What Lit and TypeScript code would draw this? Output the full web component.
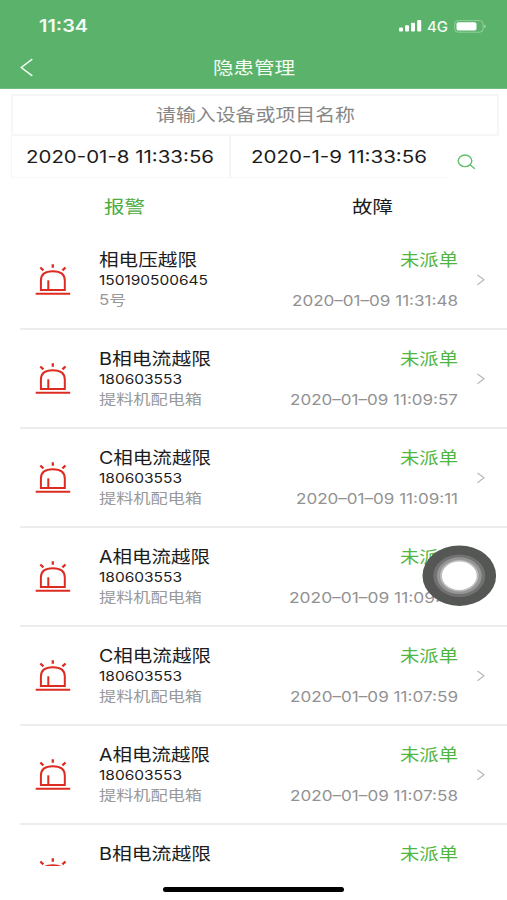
import { LitElement, html, css, svg, nothing } from "lit";
import { customElement, property } from "lit/decorators.js";

/** A single line of text stretched horizontally to a given width. */
@customElement("wide-text")
class WideText extends LitElement {
  @property({ type: Number }) w = 0;

  static styles = css`
    :host { display: block; white-space: nowrap; flex: none; }
    .t { display: inline-block; transform-origin: 0 50%; }
  `;

  updated() {
    this.style.width = this.w + "px";
    const t = this.renderRoot.querySelector(".t") as HTMLElement;
    t.style.transform = "none";
    const natural = t.getBoundingClientRect().width;
    if (natural) t.style.transform = `scaleX(${this.w / natural})`;
  }

  render() {
    return html`<span class="t"><slot @slotchange=${() => this.requestUpdate()}></slot></span>`;
  }
}

interface Alarm {
  title: string;
  tw: number;
  id?: string;
  iw?: number;
  place?: string;
  pw?: number;
  time?: string;
  mw?: number;
}

const box = { id: "180603553", iw: 83, place: "提料机配电箱", pw: 103 };
const alarms: Alarm[] = [
  { title: "相电压越限", tw: 98, id: "150190500645", iw: 109, place: "5号", pw: 27, time: "2020–01–09 11:31:48", mw: 166 },
  { title: "B相电流越限", tw: 112, ...box, time: "2020–01–09 11:09:57", mw: 168 },
  { title: "C相电流越限", tw: 112, ...box, time: "2020–01–09 11:09:11", mw: 162 },
  { title: "A相电流越限", tw: 111, ...box, time: "2020–01–09 11:09:10", mw: 169 },
  { title: "C相电流越限", tw: 112, ...box, time: "2020–01–09 11:07:59", mw: 168 },
  { title: "A相电流越限", tw: 111, ...box, time: "2020–01–09 11:07:58", mw: 168 },
  { title: "B相电流越限", tw: 112 },
];

@customElement("app-root")
class AppRoot extends LitElement {
  static styles = css`
    :host {
      display: flex;
      flex-direction: column;
      position: relative;
      width: 507px;
      height: 900px;
      overflow: hidden;
      background: #fff;
      color: #1c1c1c;
      font-family: Inter, "Noto Sans CJK SC", sans-serif;
    }
    * { box-sizing: border-box; }
    svg { display: block; flex: none; }
    header { background: #5bb36b; color: #f3fbf4; height: 89px; flex: none; border-bottom: 1px solid #70bd7e; }
    .status { display: flex; align-items: center; height: 52px; padding: 0 20px 0 39px; }
    .clock { font-size: 17px; font-weight: 600; line-height: 20px; }
    .signal { margin: 0 5px 0 auto; }
    .net { font-size: 14px; font-weight: 500; line-height: 20px; margin: 1px 6px 0 0; }
    .nav { display: flex; align-items: center; height: 30px; padding-left: 20px; }
    .title { font-size: 17px; line-height: 24px; margin: 1px 0 0 179px; }
    .search { margin: 5px 8px 0 11px; height: 42px; border: 2px solid #f6f6f6; display: flex; justify-content: center; align-items: center; color: #868686; font-size: 17px; line-height: 24px; flex: none; }
    .range { display: flex; margin-left: 11px; height: 42px; flex: none; font-size: 17px; line-height: 24px; }
    .date { height: 42px; padding: 9px 0 0 14px; border-left: 1px solid #f6f6f6; border-bottom: 1px solid #f8f8f8; width: 218px; }
    .date.to { padding-left: 20px; border-left: 2px solid #f4f4f4; }
    .glass { margin: 18px 0 0 10px; }
    .tabs { display: flex; height: 53px; flex: none; align-items: center; font-size: 17px; line-height: 24px; padding: 5px 0 0 104px; }
    .tab { color: #4cab41; }
    .tab.off { color: #1c1c1c; margin-left: 207px; }
    .list { height: 635px; overflow: hidden; flex: none; }
    .row { display: flex; height: 99px; margin-left: 20px; border-bottom: 2px solid #ededed; }
    .alarm { margin: 32px 0 0 15px; }
    .info { margin-left: 28px; padding-top: 17px; flex: 1; }
    .name { font-size: 17px; line-height: 24px; height: 24px; }
    .code { font-size: 13.5px; line-height: 20px; height: 20px; margin-top: -2px; }
    .place { font-size: 14px; line-height: 20px; height: 20px; color: #999; }
    .side { display: flex; flex-direction: column; align-items: flex-end; padding-top: 17px; }
    .state { color: #4fb63f; font-size: 17px; line-height: 24px; height: 24px; }
    .time { color: #929292; font-size: 14px; line-height: 20px; margin-top: 19px; }
    .go { margin: 43px 22px 0 19px; }
    .home { width: 181px; height: 5px; border-radius: 3px; background: #000; margin: 21px 0 0 163px; flex: none; }
    .touch { position: absolute; left: 422px; top: 545px; }
  `;

  alarmIcon() {
    return svg`<svg class="alarm" width="36" height="33" viewBox="0 0 36 33" fill="none" stroke="#dc2c22" stroke-width="2">
      <path d="M5.9 27V17.5C5.9 11.3 10.6 8.2 17.8 8.2S29.8 11.3 29.8 17.5V27Z"/>
      <path d="M13.3 27V17.3" />
      <path d="M.7 30.8H35.2"/>
      <path d="M17.8 1.2V4.8M5.3 4.5L8.4 7.4M30.5 4.5L27.4 7.4" stroke-width="2.3"/>
    </svg>`;
  }

  row(a: Alarm) {
    return html`<div class="row">
      ${this.alarmIcon()}
      <div class="info">
        <wide-text class="name" .w=${a.tw}>${a.title}</wide-text>
        ${a.id ? html`<wide-text class="code" .w=${a.iw}>${a.id}</wide-text>` : nothing}
        ${a.place ? html`<wide-text class="place" .w=${a.pw}>${a.place}</wide-text>` : nothing}
      </div>
      <div class="side">
        <wide-text class="state" .w=${58}>未派单</wide-text>
        ${a.time ? html`<wide-text class="time" .w=${a.mw}>${a.time}</wide-text>` : nothing}
      </div>
      <svg class="go" width="8" height="12" viewBox="0 0 8 12" fill="none" stroke="#b8b8b8" stroke-width="1.2"><path d="M.5 1L7 5.8L.5 10.7"/></svg>
    </div>`;
  }

  render() {
    return html`
      <header>
        <div class="status">
          <wide-text class="clock" .w=${49}>11:34</wide-text>
          <svg class="signal" width="23" height="12" viewBox="0 0 23 12" fill="#fff">
            <rect x="0" y="7.5" width="4" height="4" rx="1"/><rect x="6" y="5.3" width="4" height="6.2" rx="1"/>
            <rect x="12" y="2.8" width="4" height="8.7" rx="1"/><rect x="18.2" y="0" width="4" height="11.5" rx="1"/>
          </svg>
          <wide-text class="net" .w=${21}>4G</wide-text>
          <svg width="33" height="13" viewBox="0 0 33 13">
            <rect x=".6" y=".6" width="28.5" height="11.6" rx="3.5" fill="none" stroke="#93cf9c"/>
            <rect x="2.5" y="2.3" width="20" height="8.2" rx="1.8" fill="#fff"/>
            <path d="M30.3 4.5Q33 6.4 30.3 8.3Z" fill="#b5dfbb"/>
          </svg>
        </div>
        <div class="nav">
          <svg width="14" height="19" viewBox="0 0 14 19" fill="none" stroke="#f3fbf4" stroke-width="1.5"><path d="M12.3 1.2L1.3 9.5L12.3 17.8"/></svg>
          <wide-text class="title" .w=${82}>隐患管理</wide-text>
        </div>
      </header>
      <div class="search"><wide-text .w=${199}>请输入设备或项目名称</wide-text></div>
      <div class="range">
        <div class="date"><wide-text .w=${188}>2020-01-8 11:33:56</wide-text></div>
        <div class="date to"><wide-text .w=${176}>2020-1-9 11:33:56</wide-text></div>
        <svg class="glass" width="19" height="16" viewBox="0 0 19 16" fill="none" stroke="#62bf6a" stroke-width="1.4"><ellipse cx="8" cy="6.8" rx="6.8" ry="5.8"/><path d="M13 10.8L17.8 14.8"/></svg>
      </div>
      <div class="tabs">
        <wide-text class="tab" .w=${41}>报警</wide-text>
        <wide-text class="tab off" .w=${41}>故障</wide-text>
      </div>
      <div class="list">${alarms.map((a) => this.row(a))}</div>
      <div class="home"></div>
      <svg class="touch" width="75" height="62" viewBox="0 0 75 62">
        <ellipse cx="37.3" cy="30.7" rx="36.8" ry="30.2" fill="#555755"/>
        <ellipse cx="37.3" cy="30.7" rx="26" ry="21.3" fill="#727272"/>
        <ellipse cx="37.3" cy="30.7" rx="22.5" ry="18.4" fill="#969696"/>
        <ellipse cx="37.3" cy="30.7" rx="19.3" ry="15.7" fill="#bcbcbc"/>
        <ellipse cx="37.3" cy="30.7" rx="17.4" ry="14.2" fill="#fff"/>
      </svg>
    `;
  }
}
